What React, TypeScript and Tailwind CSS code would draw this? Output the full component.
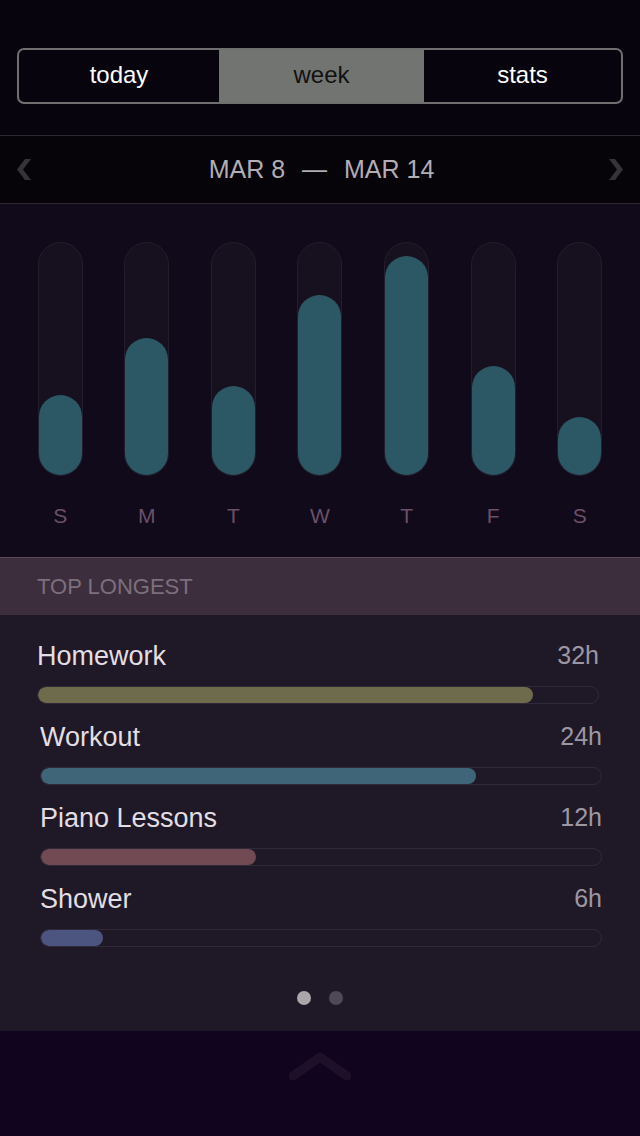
import React from 'react';

const days = [
  { label: 'S', value: 80 },
  { label: 'M', value: 137 },
  { label: 'T', value: 89 },
  { label: 'W', value: 180 },
  { label: 'T', value: 219 },
  { label: 'F', value: 109 },
  { label: 'S', value: 58 },
];

const activities = [
  { name: 'Homework', hours: '32h', pct: 88.4, color: 'bg-[#6e6b4c]', inset: 'ml-[37px] mr-[41px]' },
  { name: 'Workout', hours: '24h', pct: 77.6, color: 'bg-[#3f6578]', inset: 'ml-[40px] mr-[38px]' },
  { name: 'Piano Lessons', hours: '12h', pct: 38.4, color: 'bg-[#714a53]', inset: 'ml-[40px] mr-[38px]' },
  { name: 'Shower', hours: '6h', pct: 11, color: 'bg-[#4c5480]', inset: 'ml-[40px] mr-[38px]' },
];

const Chevron = ({ dir }: { dir: 'left' | 'right' }) => (
  <svg width="14" height="21" viewBox="0 0 14 21">
    <polygon
      fill="#37323a"
      points={dir === 'left' ? '14,0 6,10.5 14,21 8,21 0,10.5 8,0' : '0,0 8,10.5 0,21 6,21 14,10.5 6,0'}
    />
  </svg>
);

const App = () => {
  return (
    <div className="w-[640px] h-[1136px] flex flex-col bg-[#10041f] font-['Liberation_Sans',Arial,sans-serif] overflow-hidden">
      {/* segmented control */}
      <div className="bg-[#08040d] pt-[48px] pb-[31px] px-[17px]">
        <div className="h-[56px] grid grid-cols-[200px_205px_1fr] rounded-[7px] border-2 border-[#6f6f6f] overflow-hidden text-[24px] leading-none">
          <div className="flex items-center justify-center text-white pb-[3px]">today</div>
          <div className="flex items-center justify-center bg-[#727472] text-[#111] pb-[3px]">week</div>
          <div className="flex items-center justify-center text-white pb-[3px]">stats</div>
        </div>
      </div>

      {/* date range */}
      <div className="h-[69px] flex items-center justify-between px-[17px] bg-[#060309] border-y border-[#2c2731]">
        <Chevron dir="left" />
        <div className="flex items-center gap-[17px] text-[25px] text-[#b2aeb4] ml-[3px]">
          <span>MAR 8</span>
          <span>—</span>
          <span>MAR 14</span>
        </div>
        <Chevron dir="right" />
      </div>

      {/* weekly chart */}
      <div className="bg-[#110a1b] pt-[38px] pb-[29px] px-[17px] border-b border-[#5a4a5c]">
        <div className="grid grid-cols-7">
          {days.map((d, i) => (
            <div key={i} className="flex flex-col items-center">
              <div className="w-[45px] h-[234px] rounded-full bg-[#17111f] border border-[#241d2c] flex flex-col justify-end">
                <div className="rounded-full bg-[#2b5864]" style={{ height: d.value }} />
              </div>
              <div className="mt-[28px] h-[24px] leading-[24px] text-[21px] text-[#6b5068]">{d.label}</div>
            </div>
          ))}
        </div>
      </div>

      {/* header */}
      <div className="h-[57px] flex items-center px-[37px] bg-[#3c2e3d] text-[22px] text-[#7d6f7e]">TOP LONGEST</div>

      {/* list */}
      <div className="bg-[#1f1927] pt-[26px] pb-[26px]">
        <div className="flex flex-col gap-[18px]">
          {activities.map((a) => (
            <div key={a.name} className={a.inset}>
              <div className="flex items-center justify-between h-[30px]">
                <span className="text-[27px] text-[#e2dee3]">{a.name}</span>
                <span className="text-[25px] text-[#9d97a3]">{a.hours}</span>
              </div>
              <div className="mt-[15px] h-[18px] rounded-full border border-[#2f2939] overflow-hidden">
                <div className={`h-full rounded-full ${a.color}`} style={{ width: `${a.pct}%` }} />
              </div>
            </div>
          ))}
        </div>
        <div className="mt-[44px] flex justify-center gap-[18px]">
          <div className="w-[14px] h-[14px] rounded-full bg-[#aaa6ac]" />
          <div className="w-[14px] h-[14px] rounded-full bg-[#4f4858]" />
        </div>
      </div>

      {/* bottom handle */}
      <div className="flex justify-center pt-[18px]">
        <svg width="62" height="32" viewBox="0 0 62 32">
          <polyline points="4,27 31,8 58,27" fill="none" stroke="#1e1029" strokeWidth="9" strokeLinecap="round" strokeLinejoin="round" />
        </svg>
      </div>
    </div>
  );
};

export default App;
